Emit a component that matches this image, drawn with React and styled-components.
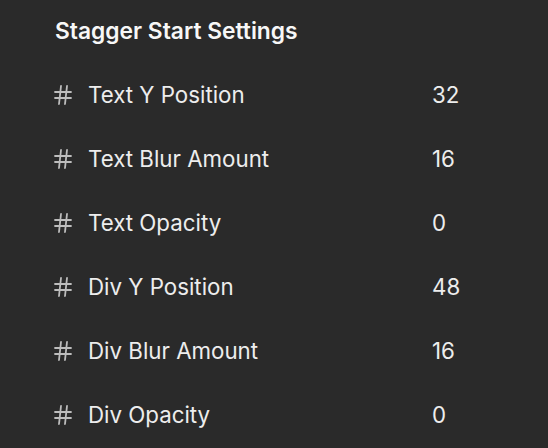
import React from "react";
import styled, { createGlobalStyle } from "styled-components";
import { Hash } from "lucide-react";

const Global = createGlobalStyle`
  html, body { margin: 0; padding: 0; background: #2a2a2a; }
  body { font-family: Inter, "Noto Sans", sans-serif; -webkit-font-smoothing: antialiased; }
`;

const Panel = styled.div`
  width: 548px;
  height: 448px;
  background: #2a2a2a;
  box-sizing: border-box;
  padding: 15px 0 0 51px;
  color: #f2f2f2;
`;

const Title = styled.h2`
  margin: 0 0 0 4px;
  font-size: 22.8px;
  font-weight: 600;
  line-height: 32px;
  color: #f7f7f7;
`;

const List = styled.div`
  display: flex;
  flex-direction: column;
  margin-top: 15px;
`;

const Row = styled.div`
  display: grid;
  grid-template-columns: 37px 344px auto;
  align-items: center;
  height: 64px;
`;

const Icon = styled(Hash)`
  display: block;
  color: #bdbdbd;
  margin-top: 1px;
`;

const Label = styled.span`
  font-size: 22.3px;
  color: #ededed;
`;

const Value = styled.span`
  font-size: 22.3px;
  color: #ededed;
`;

const rows = [
  ["Text Y Position", 32],
  ["Text Blur Amount", 16],
  ["Text Opacity", 0],
  ["Div Y Position", 48],
  ["Div Blur Amount", 16],
  ["Div Opacity", 0],
];

export default function App() {
  return (
    <>
      <Global />
      <Panel>
        <Title>Stagger Start Settings</Title>
        <List>
          {rows.map(([l, v]) => (
            <Row key={l}>
              <Icon size={24} strokeWidth={1.8} />
              <Label>{l}</Label>
              <Value>{v}</Value>
            </Row>
          ))}
        </List>
      </Panel>
    </>
  );
}
